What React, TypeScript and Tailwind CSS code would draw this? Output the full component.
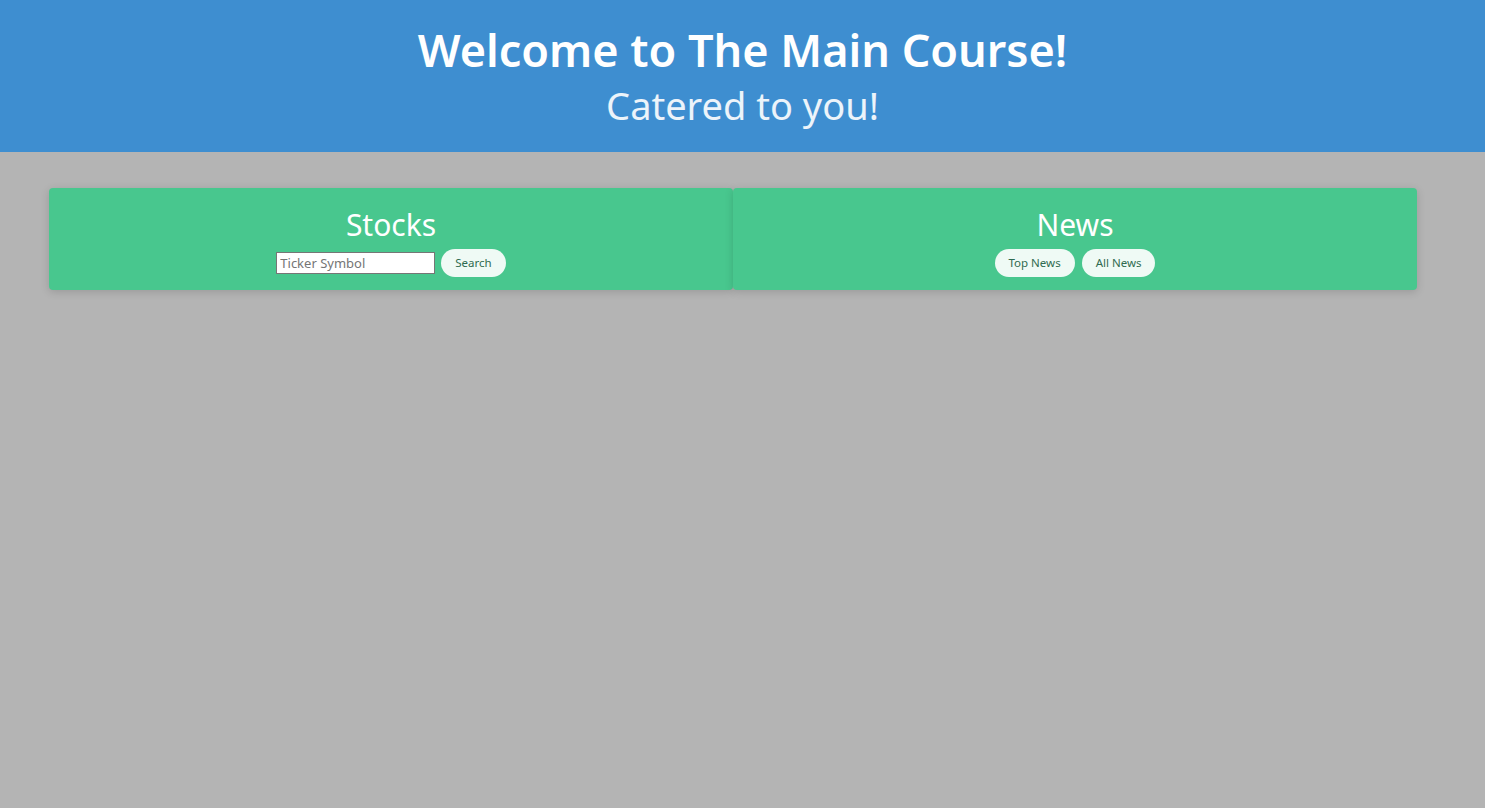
export default function App() {
  return (
    <div className="min-h-screen bg-[#b4b4b4] font-['Noto_Sans',sans-serif]">
      <div className="h-[152px] bg-[#3e8ed0] flex flex-col items-center pt-[18px]">
        <h1 className="text-[45px] leading-[64px] font-semibold text-white">
          Welcome to The Main Course!
        </h1>
        <h2 className="text-[38px] leading-[44px] text-white/90 mt-[1px]">
          Catered to you!
        </h2>
      </div>

      <div className="flex w-[1368px] ml-[49px] mt-[36px]">
        <div className="flex-1 h-[102px] bg-[#48c78e] rounded-[4px] shadow-[0_2px_8px_rgba(0,0,0,0.15)] flex flex-col items-center pt-[15px]">
          <h3 className="text-[30px] leading-[44px] text-white">Stocks</h3>
          <div className="flex items-center gap-[6px] mt-[2px]">
            <input
              type="text"
              placeholder="Ticker Symbol"
              className="w-[159px] h-[22px] bg-white border border-[#767676] text-[13px] px-[3px] placeholder:text-[#757575] outline-none"
            />
            <button className="h-[28px] px-[14px] rounded-full bg-[#effaf5] text-[#2f6b50] text-[11.5px]">
              Search
            </button>
          </div>
        </div>
        <div className="flex-1 h-[102px] bg-[#48c78e] rounded-[4px] shadow-[0_2px_8px_rgba(0,0,0,0.15)] flex flex-col items-center pt-[15px]">
          <h3 className="text-[30px] leading-[44px] text-white">News</h3>
          <div className="flex items-center gap-[7px] mt-[2px]">
            <button className="h-[28px] px-[14px] rounded-full bg-[#effaf5] text-[#2f6b50] text-[11.5px]">
              Top News
            </button>
            <button className="h-[28px] px-[14px] rounded-full bg-[#effaf5] text-[#2f6b50] text-[11.5px]">
              All News
            </button>
          </div>
        </div>
      </div>
    </div>
  );
}
